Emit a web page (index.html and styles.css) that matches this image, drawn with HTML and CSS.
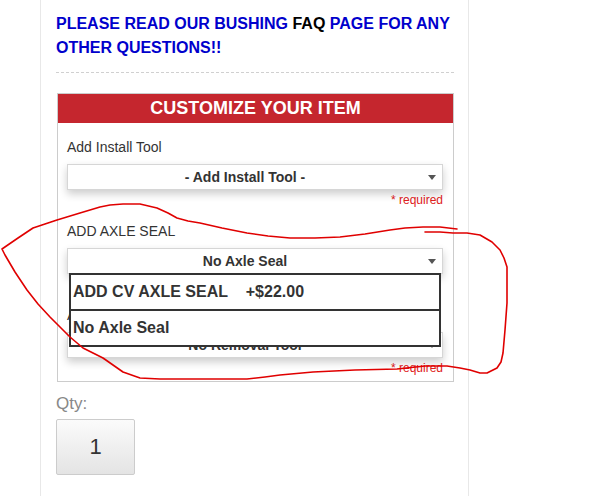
FILE: index.html
```html
<!DOCTYPE html>
<html lang="en">
  <head>
    <meta charset="UTF-8" />
    <meta name="viewport" content="width=device-width, initial-scale=1.0" />
    <title>Customize Your Item</title>
    <link rel="stylesheet" href="styles.css">
  </head>
  <body>
    <div class="page">
      <h2 class="notice">
        PLEASE READ OUR BUSHING <span class="faq">FAQ</span> PAGE FOR ANY OTHER QUESTIONS!!
      </h2>

      <div class="customize">
        <div class="customize-title">CUSTOMIZE YOUR ITEM</div>
        <div class="customize-body">
          <div class="option-group">
            <div class="option-label">Add Install Tool</div>
            <div class="select">- Add Install Tool -</div>
            <div class="required">* required</div>
          </div>

          <div class="option-group">
            <div class="option-label">ADD AXLE SEAL</div>
            <div class="select-wrap">
              <div class="select">No Axle Seal</div>
              <ul class="dropdown">
                <li>ADD CV AXLE SEAL&nbsp;&nbsp;&nbsp; +$22.00</li>
                <li>No Axle Seal</li>
              </ul>
            </div>
          </div>

          <div class="option-group">
            <div class="option-label">Add Removal Tool</div>
            <div class="select">No Removal Tool</div>
            <div class="required">* required</div>
          </div>
        </div>
      </div>

      <div class="qty-label">Qty:</div>
      <div class="qty-box">1</div>
    </div>

    <svg class="scribble" width="594" height="496" viewBox="0 0 594 496">
      <polyline points="457,229 440,227 423,227 405,228 390,230 365,234 340,237 315,238 290,238 268,236 247,233 222,228 200,223 188,221 177,218 168,213 157,208 140,204 123,204 110,205 100,207 80,213 57,220 45,224 33,228 18,238 2,249 5,255 15,272 27,290 38,304 50,317 60,327 70,337 83,348 93,353 103,358 113,365 123,372 140,378 160,379 180,379 214,379 247,379 265,377 280,375 313,372 355,370 397,369 425,366 447,366 460,368 470,370 480,373 487,373 497,368 501,362 503,353 505,330 507,303 507,285 507,267 504,258 500,250 492,242 480,235 467,233 453,233 440,232 425,232" />
    </svg>
  </body>
</html>
```

FILE: styles.css
```css
body {
  margin: 0;
  font-family: "Liberation Sans", Arial, sans-serif;
  background: #fff;
  color: #333;
}
.page {
  width: 398px;
  min-height: 496px;
  margin-left: 40px;
  padding: 0 14px 0 15px;
  border-left: 1px solid #e8e8e8;
  border-right: 1px solid #e8e8e8;
  box-sizing: content-box;
}
.notice {
  margin: 0;
  padding: 12px 0 12px;
  font-size: 16px;
  line-height: 24px;
  font-weight: bold;
  color: #0000cc;
  border-bottom: 1px dashed #d0d0d0;
}
.faq {
  color: #000;
}
.customize {
  margin: 20px 0 0 1px;
  border: 1px solid #ccc;
}
.customize-title {
  height: 29px;
  line-height: 29px;
  background: #c5262e;
  color: #fff;
  font-size: 18px;
  font-weight: bold;
  text-align: center;
}
.customize-body {
  padding: 14px 10px 5px 9px;
}
.option-group {
  margin-bottom: 13px;
}
.option-group:last-child {
  margin-bottom: 0;
}
.option-label {
  font-size: 14px;
  line-height: 20px;
  color: #333;
  margin-bottom: 7px;
}
.select {
  position: relative;
  height: 24px;
  line-height: 24px;
  padding-right: 20px;
  border: 1px solid #d6d6d6;
  background: #fff;
  box-shadow: 0 4px 9px rgba(0, 0, 0, 0.2);
  font-size: 14px;
  font-weight: bold;
  color: #333;
  text-align: center;
}
.select::after {
  content: "";
  position: absolute;
  right: 6px;
  top: 10px;
  border-left: 4px solid transparent;
  border-right: 4px solid transparent;
  border-top: 5px solid #555;
}
.select-wrap {
  position: relative;
  height: 26px;
  margin-bottom: 31px;
}
.dropdown {
  position: absolute;
  top: 25px;
  left: 2px;
  right: 2px;
  margin: 0;
  padding: 0;
  list-style: none;
  background: #fff;
  border: 1px solid #333;
  z-index: 2;
}
.dropdown li {
  height: 34px;
  line-height: 34px;
  padding-left: 2px;
  border: 1px solid #333;
  font-size: 16px;
  font-weight: bold;
  color: #333;
}
.required {
  margin-top: 2px;
  font-size: 12px;
  line-height: 16px;
  color: #e02020;
  text-align: right;
}
.qty-label {
  margin-top: 12px;
  font-size: 17px;
  line-height: 20px;
  color: #888;
}
.qty-box {
  width: 77px;
  height: 54px;
  margin-top: 5px;
  line-height: 54px;
  border: 1px solid #ccc;
  border-radius: 2px;
  background: linear-gradient(#fbfbfb, #e4e4e4);
  font-size: 22px;
  color: #333;
  text-align: center;
}
.scribble {
  position: absolute;
  top: 0;
  left: 0;
  pointer-events: none;
  z-index: 5;
}
.scribble polyline {
  fill: none;
  stroke: #e00000;
  stroke-width: 1.6;
  stroke-linejoin: round;
  stroke-linecap: round;
}
```
